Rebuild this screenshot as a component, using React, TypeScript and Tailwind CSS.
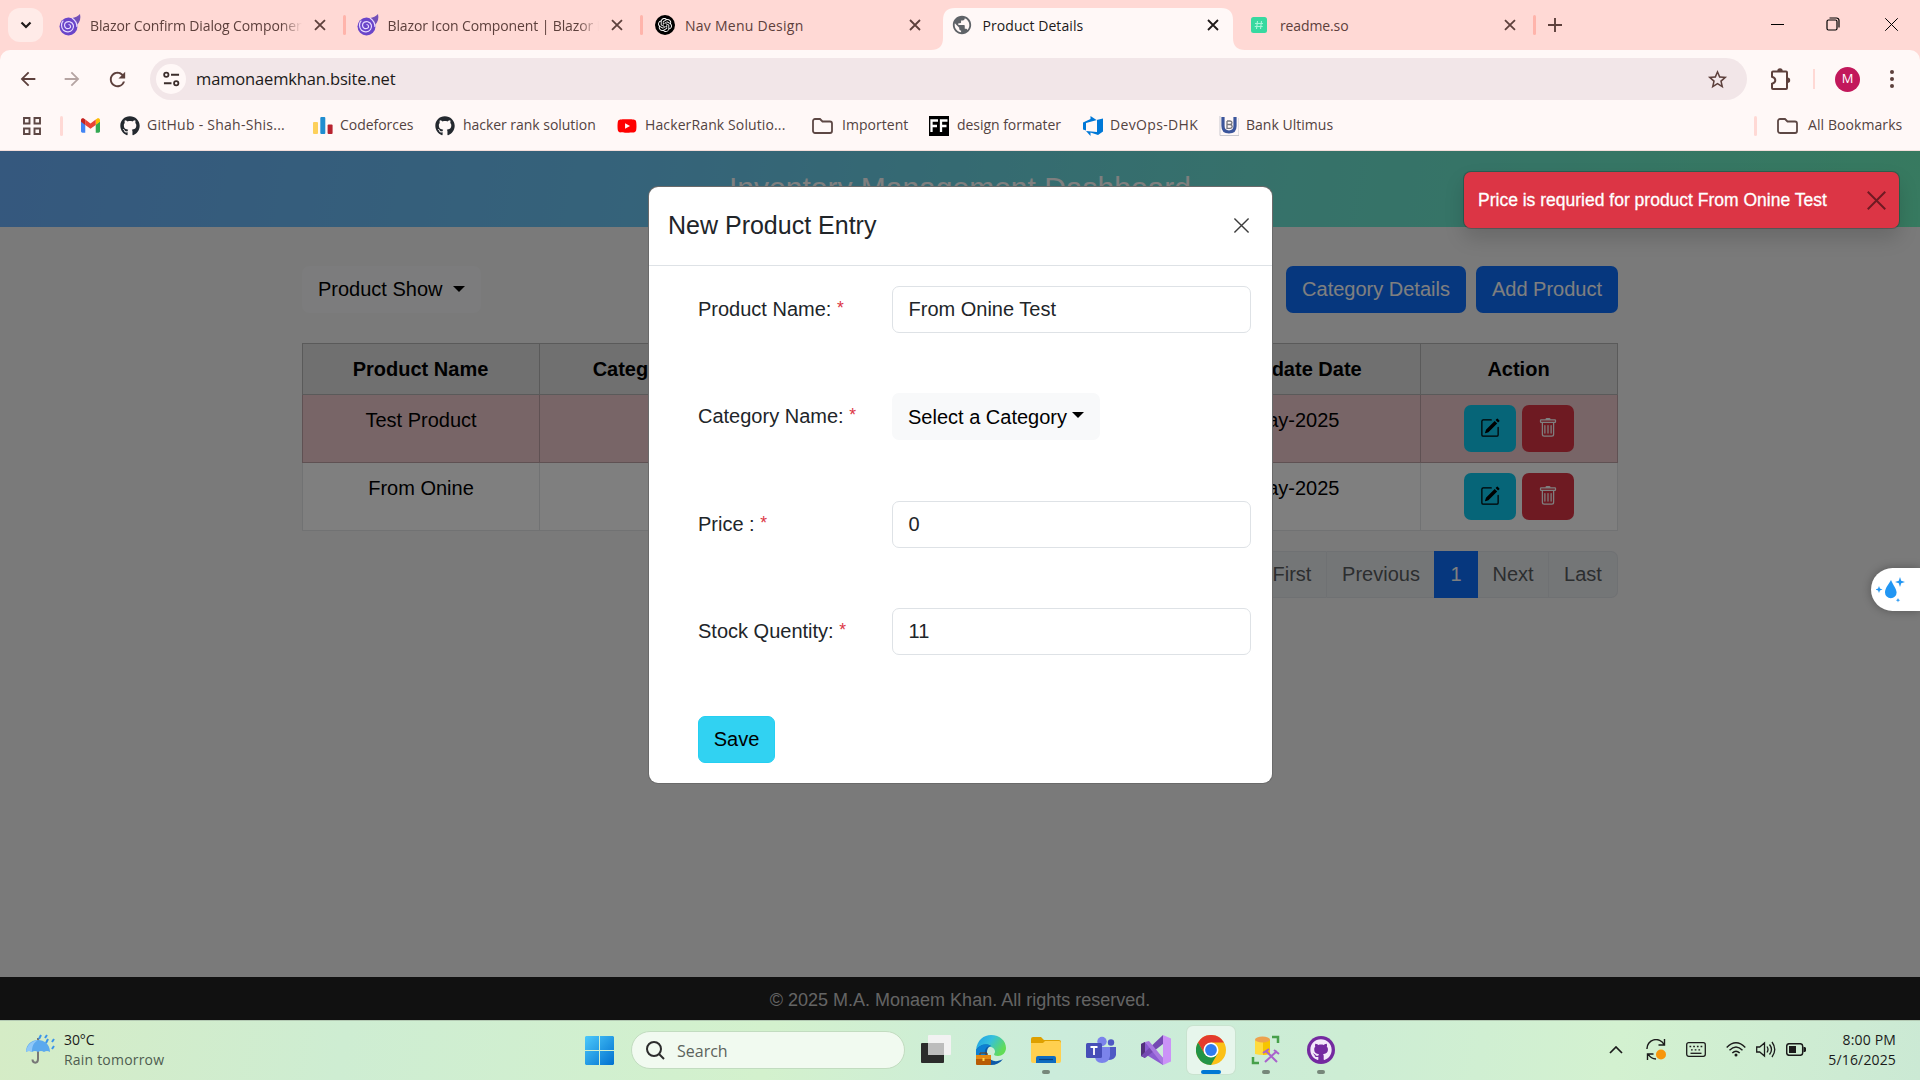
import React from "react";
import { FaGithub, FaYoutube } from "react-icons/fa";
import { SiOpenai } from "react-icons/si";
import { BsPencilSquare, BsTrash } from "react-icons/bs";
import { MdRefresh, MdArrowBack, MdArrowForward, MdPublic, MdStarBorder } from "react-icons/md";

const UI = "font-['Open_Sans','Noto_Sans',sans-serif]";

function Cross({ className, w = 1.8 }: { className: string; w?: number }) {
  return (
    <svg viewBox="0 0 12 12" className={className} fill="none" stroke="currentColor" strokeWidth={w}>
      <path d="M1 1 11 11M11 1 1 11" />
    </svg>
  );
}

function Blazor() {
  return (
    <svg viewBox="0 0 22 22" className="-ml-px size-[22px]">
      <path d="M21 0c-2 2.500-5 3.500-8 4l5 7c3-3 4-7 3-11z" fill="#7350b8" />
      <circle cx="9.500" cy="12.500" r="9" fill="#6a45c9" />
      <path d="M13 4c3 2 5 5 5 9M9.500 10.500c2 0 3 2.500 1 3.800-2.500 1.200-5-.6-5-3 0-3 3-4.300 5.500-3.500 3.500 1 4.500 5 2.500 7.700-2.200 3-6.500 3.200-9 .8-2.500-2.600-2.700-7-.2-9.600" fill="none" stroke="#e6d9ff" strokeWidth="1.200" />
    </svg>
  );
}

function ReadmeLogo() {
  return (
    <svg viewBox="0 0 18 18" className="size-[18px]">
      <rect x="1" y="1" width="16" height="16" rx="2.500" fill="#37d9a0" />
      <path d="M7.500 5 6.500 13M11.500 5l-1 8M5 7.500h8M4.700 10.500h8" stroke="#a5f5d8" strokeWidth="1.100" />
    </svg>
  );
}

const fadeTitle =
  "w-[212px] overflow-hidden whitespace-nowrap text-[14px] tracking-[-0.120px] [mask-image:linear-gradient(90deg,#000_90%,transparent)]";

const tabs = [
  { icon: <Blazor />, title: "Blazor Confirm Dialog Component", look: fadeTitle },
  { icon: <Blazor />, title: "Blazor Icon Component | Blazor Bootstrap", look: fadeTitle },
  {
    icon: (
      <span className="flex size-5 items-center justify-center rounded-full bg-black text-white">
        <SiOpenai size={14} />
      </span>
    ),
    title: "Nav Menu Design",
    look: "w-[212px] whitespace-nowrap text-[14px] tracking-[0.260px]",
  },
  {
    icon: <MdPublic size={22} className="-ml-0.5 text-[#5f6368]" />,
    title: "Product Details",
    active: true,
    look: "relative w-[212px] whitespace-nowrap text-[14px] tracking-[0.080px]",
  },
  { icon: <ReadmeLogo />, title: "readme.so", look: "w-[212px] whitespace-nowrap text-[14px] tracking-[-0.120px]" },
];

function TabStrip() {
  return (
    <div className={`flex h-[50px] bg-[#ffd9d5] text-[#5d403c] ${UI}`}>
      <div className="ml-2 mt-2 flex h-[34px] w-[35px] items-center justify-center rounded-xl bg-[#ffebe8] text-[#201a19]">
        <svg viewBox="0 0 12 8" className="h-2 w-3" fill="none" stroke="currentColor" strokeWidth="2.200">
          <path d="M1.500 1.500 6 6l4.500-4.500" />
        </svg>
      </div>
      <div className="ml-[5px] flex">
        {tabs.map((t, i) => (
          <div
            key={t.title}
            className={
              t.active
                ? "relative flex w-[297.5px] items-center text-[#201a19]"
                : "flex w-[297.5px] items-center"
            }
          >
            {t.active && (
              <svg viewBox="0 0 314 42" className="absolute -left-[10px] top-2 h-[42px] w-[314px]" fill="#fff8f7">
                <path d="M0 42c8 0 12-4 12-12V12C12 4 16 0 24 0h266c8 0 12 4 12 12v18c0 8 4 12 12 12z" />
              </svg>
            )}
            <span className="relative ml-3 flex w-[30px] shrink-0 items-center">{t.icon}</span>
            <span className={t.look}>{t.title}</span>
            <Cross className="relative ml-[12px] size-[12px]" w={1.8} />
            {i !== 2 && i !== 3 && <span className="ml-[17px] h-5 w-[3px] rounded bg-[#ffb4ab]" />}
          </div>
        ))}
      </div>
      <svg viewBox="0 0 14 14" className="ml-[12.500px] mt-[18px] size-[14px]" stroke="currentColor" strokeWidth="1.900">
        <path d="M7 0v14M0 7h14" />
      </svg>
      <div className="ml-auto flex h-[48px] items-center text-black">
        <span className="h-px w-[13px] bg-black" />
        <svg viewBox="0 0 14 14" className="ml-[42.500px] size-[14px]" fill="none" stroke="currentColor" strokeWidth="1.200">
          <rect x="1" y="3" width="10" height="10" rx="1.500" />
          <path d="M3.500 1h7A2.500 2.500 0 0 1 13 3.500v7" />
        </svg>
        <Cross className="ml-[44px] mr-[21px] size-[15px]" w={0.8} />
      </div>
    </div>
  );
}

function Toolbar() {
  return (
    <div className={`flex h-[58px] items-center rounded-t-[10px] bg-[#fff8f7] text-[#5d403c] ${UI}`}>
      <MdArrowBack size={22} className="ml-[17px]" />
      <MdArrowForward size={22} className="ml-[22px] text-[#b5a4a2]" />
      <MdRefresh size={23} className="ml-[23px]" />
      <div className="ml-[21px] flex h-[42px] w-[1597px] items-center rounded-full bg-[#f2e6e8]">
        <span className="ml-[6px] flex size-[30px] items-center justify-center rounded-full bg-[#fff8f7]">
          <svg viewBox="0 0 18 16" className="h-4 w-[17px]" fill="none" stroke="#3b2d2b" strokeWidth="1.900">
            <circle cx="3.500" cy="3.500" r="2.300" />
            <path d="M8.500 3.500H17M1 12.500h8" />
            <circle cx="14" cy="12.500" r="2.300" />
          </svg>
        </span>
        <span className="ml-2.5 pt-px text-[16.500px] tracking-[-0.150px] text-[#201a19]">mamonaemkhan.bsite.net</span>
        <MdStarBorder size={23} className="ml-auto mr-[18px]" />
      </div>
      <svg viewBox="0 0 24 24" className="ml-[21px] size-6" fill="none" stroke="currentColor" strokeWidth="2">
        <path d="M4 5.500Q4 4.500 5 4.500h13q1 0 1 1V21q0 1-1 1H5q-1 0-1-1v-4.200q3.300-.8 3.300-3.500T4 9.700z" />
        <path d="M9.300 4a2.700 2.700 0 0 1 5.400 0zM19.500 10.500a2.700 2.700 0 0 1 0 5.400z" fill="currentColor" stroke="none" />
      </svg>
      <span className="ml-[21px] h-5 w-0.5 bg-[#ffd9d5]" />
      <span className="ml-5 flex size-[25px] items-center justify-center rounded-full bg-[#c2185b] text-[13px] text-white">M</span>
      <svg viewBox="0 0 4 18" className="ml-[30px] h-[18px] w-1" fill="currentColor">
        <circle cx="2" cy="2" r="2" />
        <circle cx="2" cy="9" r="2" />
        <circle cx="2" cy="16" r="2" />
      </svg>
    </div>
  );
}

function FolderOutline() {
  return (
    <svg viewBox="0 0 21 16" className="h-4 w-[21px]" fill="none" stroke="#5d4744" strokeWidth="1.800">
      <path d="M1 13V3a2 2 0 0 1 2-2h5l2.500 2.500H18a2 2 0 0 1 2 2V13a2 2 0 0 1-2 2H3a2 2 0 0 1-2-2z" />
    </svg>
  );
}

function Mark({ w, gap, icon, label }: { w: string; gap: string; icon: React.ReactNode; label?: string }) {
  return (
    <div className={`flex shrink-0 items-center whitespace-nowrap ${w}`}>
      <span className={`flex shrink-0 items-center ${gap}`}>{icon}</span>
      <span className="-mt-0.5">{label}</span>
    </div>
  );
}

function Bookmarks() {
  return (
    <div className={`flex h-[43px] items-center border-b border-[#f3dedb] bg-[#fff8f7] pb-[7px] text-[14px] tracking-[-0.040px] text-[#534341] ${UI}`}>
      <svg viewBox="0 0 18 18" className="ml-[23px] size-[18px]" fill="none" stroke="#5d4744" strokeWidth="1.900">
        <path d="M1 1h5.500v5.500H1zM11.500 1H17v5.500h-5.500zM1 11.500h5.500V17H1zM11.500 11.500H17V17h-5.500z" />
      </svg>
      <span className="ml-[19px] mr-[18px] h-5 w-[3px] rounded bg-[#ffd9d5]" />
      <Mark
        w="w-[39px]"
        gap=""
        icon={
          <svg viewBox="0 0 20 15" className="h-[15px] w-[19px]">
            <path d="M0 3v10.500C0 14.300.7 15 1.500 15h3V6.500z" fill="#4285f4" />
            <path d="M20 3v10.500c0 .8-.7 1.500-1.500 1.500h-3V6.500z" fill="#34a853" />
            <path d="M15.500 1.200V7L20 3.600V2c0-2-2-2.500-3.300-1.600z" fill="#fbbc04" />
            <path d="M4.500 1.200 10 5.300l5.500-4.100V7L10 11 4.500 7z" fill="#ea4335" />
            <path d="M0 2v1.600L4.500 7V1.200L3.300.4C2-.5 0 0 0 2z" fill="#c5221f" />
          </svg>
        }
      />
      <Mark w="w-[193px] tracking-[0.260px]" gap="w-[27px]" icon={<FaGithub size={20} color="#24292f" />} label="GitHub - Shah-Shis..." />
      <Mark
        w="w-[122px]"
        gap="w-[27px]"
        icon={
          <svg viewBox="0 0 20 17" className="h-[17px] w-5">
            <rect y="5" width="5" height="12" rx="1" fill="#fdd05a" />
            <rect x="7.300" y="0" width="5" height="17" rx="1" fill="#1f8dd0" />
            <rect x="14.600" y="7.500" width="5" height="9.500" rx="1" fill="#b8232f" />
          </svg>
        }
        label="Codeforces"
      />
      <Mark w="w-[182px]" gap="w-[28px]" icon={<FaGithub size={20} color="#24292f" />} label="hacker rank solution" />
      <Mark w="w-[195px] tracking-[0.120px]" gap="w-[28px]" icon={<FaYoutube size={20} color="#f00" />} label="HackerRank Solutio..." />
      <Mark w="w-[117px] tracking-[0.040px]" gap="w-[30px]" icon={<FolderOutline />} label="Importent" />
      <Mark
        w="w-[154px]"
        gap="w-[28px]"
        icon={
          <svg viewBox="0 0 20 20" className="size-5">
            <rect width="20" height="20" />
            <path d="M2.500 16V4.500h6.500M2.500 10h5.500M12 16V4.500h6.500M12 10h5.500" stroke="#fff" strokeWidth="2.300" fill="none" />
          </svg>
        }
        label="design formater"
      />
      <Mark
        w="w-[136px] tracking-[0.340px]"
        gap="w-[27px]"
        icon={
          <svg viewBox="0 0 20 20" className="size-5" fill="#0078d7">
            <path d="M0 6.500 7.500 3V0l6 4 6.500-1.500v13L15 19l-7.500-2.500V20l-4.500-5 11 1V4L3 7v7.500L0 13.500z" />
          </svg>
        }
        label="DevOps-DHK"
      />
      <Mark
        w="w-[130px] tracking-[0.020px]"
        gap="w-[27px]"
        icon={
          <svg viewBox="0 0 20 20" className="size-5" fill="none">
            <path d="M1 0v19.500h19V2" stroke="#c9c9cf" />
            <path d="M4 1v9c0 4 2.500 6 6 6s6-2 6-6V1" stroke="#3b559b" strokeWidth="3.200" />
            <path d="M8 5h3q2 .2 2 1.700T11 8.500H8V5M8 8.500h3.200q2 .2 2 1.900t-2 1.900H8z" stroke="#76767d" strokeWidth="1.300" />
          </svg>
        }
        label="Bank Ultimus"
      />
      <span className="ml-auto mr-5 h-5 w-[3px] rounded bg-[#ffd9d5]" />
      <Mark w="w-[143px] tracking-[0.080px]" gap="w-[31px]" icon={<FolderOutline />} label="All Bookmarks" />
    </div>
  );
}

function Caret({ className }: { className: string }) {
  return <span className={`inline-block h-0 w-0 border-x-[6px] border-t-[6px] border-x-transparent border-t-current ${className}`} />;
}

const rows = [
  { name: "Test Product", tone: "bg-[#f1cbce] border-[#bfa3a6]", cell: "border-[#bfa3a6]" },
  { name: "From Onine", tone: "bg-white border-[#e2e4e6]", cell: "border-[#e2e4e6]" },
];

const cols = "grid grid-cols-[237px_254px_174px_173px_280px_1fr]";

function ProductPage() {
  return (
    <div className="flex h-full flex-col bg-[#f4f4f4] text-black">
      <header className="flex h-[76px] justify-center bg-[linear-gradient(100deg,#6ab0fc_0%,#6ac6f4_33%,#6ce4d4_67%,#6ef4c0_100%)] pt-[15px]">
        <h1 className="text-[30px] leading-[44px] text-white">Inventory Management Dashboard</h1>
      </header>
      <main className="ml-[302px] flex w-[1316px] flex-1 flex-col pt-[39px] text-[20px] leading-[30px]">
        <div className="flex h-[47px] gap-2.5">
          <button className="mr-auto flex w-[179px] items-center rounded-[7px] bg-[#f8f9fa] pb-0.5 pl-4">
            Product Show
            <Caret className="ml-[10px]" />
          </button>
          <button className="w-[180px] rounded-[7px] bg-[#0d6efd] pb-0.5 text-white">Category Details</button>
          <button className="w-[142px] rounded-[7px] bg-[#0d6efd] pb-0.5 text-white">Add Product</button>
        </div>
        <div className="mt-[30px] text-center">
          <div className={`${cols} h-[52px] items-stretch border-y border-l border-[#b5b5b5] bg-[#e1e1e1] font-bold leading-[50px]`}>
            {["Product Name", "Category Name", "Price", "Stock", "Last Update Date", "Action"].map((h) => (
              <div key={h} className="-ml-px whitespace-nowrap border-r border-[#b5b5b5]">{h}</div>
            ))}
          </div>
          {rows.map((r) => (
            <div key={r.name} className={`${cols} h-[68px] border-b border-l ${r.tone}`}>
              {[r.name, "", "", "", "16-May-2025"].map((c, i) => (
                <div key={i} className={`border-r pt-[10px] ${r.cell}`}>{c}</div>
              ))}
              <div className={`flex justify-center gap-1.5 border-r pt-2.5 ${r.cell}`}>
                <span className="flex h-[47px] w-[52px] items-center justify-center rounded-[7px] bg-[#0dcaf0]">
                  <BsPencilSquare size={20} className="-mt-0.5" />
                </span>
                <span className="flex h-[47px] w-[52px] items-center justify-center rounded-[7px] bg-[#dc3545] pr-px text-white">
                  <BsTrash size={20} className="-mt-0.5" />
                </span>
              </div>
            </div>
          ))}
        </div>
        <nav className="mt-5 flex h-[47px] justify-end text-center leading-[44px] text-[#595c5f]">
          <span className="w-[70px] rounded-l-[7px] border border-[#dee2e6] bg-[#e9ecef]">First</span>
          <span className="w-[107px] border-y border-[#dee2e6] bg-[#e9ecef] pl-px">Previous</span>
          <span className="w-[44px] bg-[#0d6efd] leading-[46px] text-white">1</span>
          <span className="w-[71px] border-y border-r border-[#dee2e6] bg-[#e9ecef]">Next</span>
          <span className="w-[69px] rounded-r-[7px] border-y border-r border-[#dee2e6] bg-[#e9ecef]">Last</span>
        </nav>
      </main>
      <footer className="h-[43px] bg-[#222] text-center text-[18px] leading-[46px] text-[#c8c8c8]">
        © 2025 M.A. Monaem Khan. All rights reserved.
      </footer>
    </div>
  );
}

function Field({ label, h, children }: { label: string; h: string; children: React.ReactNode }) {
  return (
    <div className={`flex ${h}`}>
      <label className="w-[194px] pt-2 leading-[30px]">
        {label} <span className="relative -top-0.5 text-[17.500px] text-[#dc3545]">*</span>
      </label>
      {children}
    </div>
  );
}

function Input({ value }: { value: string }) {
  return (
    <div className="h-[47px] w-[359px] rounded-[7px] border border-[#dee2e6] pl-[15.500px] leading-[45px]">{value}</div>
  );
}

function Modal() {
  return (
    <section className="absolute left-[649px] top-[36px] h-[596px] w-[623px] rounded-[9px] bg-white text-[20px] text-[#212529] shadow-[0_0_0_1px_#6a6a6a]">
      <div className="flex h-[79px] items-center justify-between border-b border-[#dee2e6] pb-px pl-[19px] pr-[22px]">
        <h2 className="text-[25px]">New Product Entry</h2>
        <Cross className="size-[17px] text-[#3c3c3c]" w={1} />
      </div>
      <div className="pl-[49px] pt-5">
        <Field h="h-[107px]" label="Product Name:"><Input value="From Onine Test" /></Field>
        <Field h="h-[108px]" label="Category Name:">
          <div className="flex h-[47px] w-[208px] items-center whitespace-nowrap rounded-[7px] bg-[#f8f9fa] pl-4 text-black">
            Select a Category
            <Caret className="-mt-1 ml-[5px]" />
          </div>
        </Field>
        <Field h="h-[107px]" label="Price :"><Input value="0" /></Field>
        <Field h="h-[108px]" label="Stock Quentity:"><Input value="11" /></Field>
        <button className="h-[47px] w-[77px] rounded-[7px] border border-[#25cff2] bg-[#31d2f2] pb-0.5 text-black">Save</button>
      </div>
    </section>
  );
}

function Toast() {
  return (
    <div className="absolute left-[1464px] top-[21px] flex h-[56px] w-[435px] items-center justify-between rounded-[7px] bg-[#dc3545] pl-[14px] pr-[12px] text-[17.500px] text-white shadow-[0_10px_20px_rgba(0,0,0,0.15),0_0_0_1px_rgba(0,0,0,0.2)] [-webkit-text-stroke:0.3px_white]">
      Price is requried for product From Onine Test
      <Cross className="size-[21px] text-[#6e1a22]" w={1.1} />
    </div>
  );
}

function DropWidget() {
  return (
    <div className="absolute right-0 top-[417px] flex h-[43px] w-[49px] items-center rounded-l-full bg-white pl-1.5 shadow-[0_0_10px_rgba(0,0,0,0.3)]">
      <svg viewBox="0 0 30 26" className="-ml-px h-[26px] w-[30px]" fill="#2196f3">
        <path d="M15 3c-2 4-6 8-6 12.500a5.800 5.800 0 0 0 11.600 0C20.600 12 17 8 15 3z" />
        <path d="M24 0l1.200 3.800L29 5l-3.800 1.200L24 10l-1.200-3.800L19 5l3.800-1.200zM3 9l.9 2.600 2.600.9-2.600.9L3 16l-.9-2.600-2.600-.9 2.600-.9zM22 21l.6 1.600 1.600.6-1.600.6L22 25.500l-.6-1.700-1.600-.6 1.600-.6z" />
      </svg>
    </div>
  );
}

function AppSlot({ children, mark, active }: { children: React.ReactNode; mark?: boolean; active?: boolean }) {
  return (
    <div className={active ? "flex h-12 w-12 flex-col items-center rounded-md bg-[#e7f6ec] pt-[9px] shadow-[0_0_0_1px_#c9e3cf]" : "flex h-12 w-12 flex-col items-center pt-[9px]"}>
      <span className="flex size-[30px] items-center justify-center">{children}</span>
      {active && <span className="mt-[5px] h-1 w-5 rounded-full bg-[#0078d4]" />}
      {mark && <span className="mt-[5px] h-1 w-2 rounded-full bg-[#76877a]" />}
    </div>
  );
}

function Taskbar() {
  return (
    <div className={`flex h-[60px] border-t border-[#b3c9b3] bg-[linear-gradient(100deg,#d5ecc6_0%,#ceedd2_18%,#d3f1cd_40%,#cbecdb_55%,#cdedd4_70%,#d3f1d0_84%,#cbe9d4_100%)] text-[14px] text-[#1b1b1b] ${UI}`}>
      <div className="flex w-[573px] pl-[26px] pt-[12px]">
        <svg viewBox="0 0 29 30" className="mt-[1px] h-[30px] w-[29px]">
          <path d="M12 4v21c0 5-5.500 4.500-5.500.5" fill="none" stroke="#777" strokeWidth="2" />
          <path d="M0 18C0 2 24 2 24 18q-3-2-6 0-3-2-6 0-3-2-6 0-3-2-6 0z" fill="#5ba9ee" />
          <path d="M0 18C1 10 6 7 12 6 7 9 6 13 6 18q-3-2-6 0z" fill="#8fc8f8" />
          <path d="m15 1-2 4M21 1l-2 3M22 5l-2 4M28 5l-2 3M28 12l-2 3" stroke="#3a94ea" strokeWidth="2" />
        </svg>
        <div className="ml-[9px] leading-5">
          <div className="mt-[-3px] tracking-[-0.100px]">30°C</div>
          <div className="tracking-[0.200px] text-[#4f5d50]">Rain tomorrow</div>
        </div>
      </div>
      <div className="flex pt-[5px]">
        <svg viewBox="0 0 29 29" className="ml-3 mt-[10px] size-[29px]">
          <defs>
            <linearGradient id="win" gradientUnits="userSpaceOnUse" x1="0" y1="0" x2="29" y2="29">
              <stop stopColor="#4cc9fb" />
              <stop offset="1" stopColor="#0070cf" />
            </linearGradient>
          </defs>
          <path d="M1 0h13v14H0V1zM15 0h13l1 1v13H15zM0 15h14v14H1l-1-1zM15 15h14v13l-1 1H15z" fill="url(#win)" />
        </svg>
        <div className="ml-[17px] mt-[5px] flex h-[38px] w-[274px] items-center rounded-full border border-[#c2dcc0] bg-[#f1faf0] pl-[14px] text-[16px] text-[#5c635c]">
          <svg viewBox="0 0 19 19" className="mr-[12px] size-[19px]" fill="none" stroke="#2c2c2c" strokeWidth="2">
            <circle cx="8" cy="8" r="7" />
            <path d="m13 13 5 5" />
          </svg>
          <span className="pt-0.5">Search</span>
        </div>
        <div className="ml-[7px] flex gap-[7px]">
          <AppSlot>
            <svg viewBox="0 0 30 30" className="size-[30px]">
              <rect y="8" width="23" height="20" rx="1" fill="#2b2b2b" />
              <rect x="7" y="0" width="23" height="20" rx="1" fill="#f2f2f2" />
              <path d="M7 8h16v12H7z" fill="#bdbdbd" />
            </svg>
          </AppSlot>
          <AppSlot>
            <svg viewBox="0 0 30 30" className="size-[30px]">
              <defs>
                <linearGradient id="edge" x1="0" y1="0" x2="1" y2=".5">
                  <stop stopColor="#1c9de8" />
                  <stop offset=".5" stopColor="#36c0dc" />
                  <stop offset="1" stopColor="#62dc55" />
                </linearGradient>
              </defs>
              <path d="M0 15C1 5 8 0 15 0c9 0 15 6 15 13 0 5-4 8-8 8-3 0-4-1-4-2 2-2 1-6-3-7C9 10 3 12 0 15z" fill="url(#edge)" />
              <path d="M0 15c3-5 10-7 15-4-4 1-5 6-3 10 2 5 8 7 15 3-3 4-7 6-12 6C6 30 0 23 0 15z" fill="#0d59a8" />
              <path d="M0 15c3-5 10-7 15-4-5 0-7 4-6 9H0z" fill="#0d80d2" />
              <rect y="20" width="15" height="10" rx="1" fill="#b85c05" />
              <path d="M0 20h15v4H0z" fill="#e48a13" />
              <path d="M4 20v-2h7v2" fill="none" stroke="#7a3c05" />
              <rect x="6.500" y="23" width="2" height="3" fill="#ffd24a" />
            </svg>
          </AppSlot>
          <AppSlot mark>
            <svg viewBox="0 0 30 26" className="h-[26px] w-[30px]">
              <path d="M0 2Q0 0 2 0h8l3 3h15q2 0 2 2v6H0z" fill="#dea000" />
              <path d="M0 6h12l2-2h14q2 0 2 2v18q0 2-2 2H2q-2 0-2-2z" fill="#ffd04f" />
              <path d="M5 26v-5q0-2 2-2h16q2 0 2 2v5z" fill="#0f6cc0" />
              <path d="M8 22.500h14" stroke="#073f7e" strokeWidth="1.200" />
            </svg>
          </AppSlot>
          <AppSlot>
            <svg viewBox="0 0 30 30" className="size-[30px]">
              <circle cx="25" cy="7.500" r="3.200" fill="#4e59c4" />
              <path d="M20 12h10v8q-1 5-8 5z" fill="#4e59c4" />
              <circle cx="16" cy="6.500" r="4.700" fill="#7b83eb" />
              <path d="M9 12h15v9q-1 7-8 7t-7-7z" fill="#7b83eb" />
              <rect y="8" width="16" height="15" rx="1.500" fill="#464eb8" />
              <path d="M4.500 12h7M8 12v8" stroke="#fff" strokeWidth="1.800" />
            </svg>
          </AppSlot>
          <AppSlot>
            <svg viewBox="0 0 30 30" className="size-[30px]">
              <path d="M0 9l4-2 18 16v7L4 19z" fill="#8a5bd0" />
              <path d="M0 9l4-2v16l-4-2z" fill="#52307c" />
              <path d="M0 21l4 2L22 9V0L4 17z" fill="#7449b2" />
              <path d="M4 7l4-1 14 17v7z" fill="#a777e0" />
              <path d="M22 0l8 3.500v23L22 30z" fill="#cb93f7" />
            </svg>
          </AppSlot>
          <AppSlot active>
            <svg viewBox="0 0 30 30" className="size-[30px]">
              <circle cx="15" cy="15" r="15" fill="#fbc116" />
              <path d="M2 7.500A15 15 0 0 1 28 7.500H15L8.500 19z" fill="#e33b2e" />
              <path d="M2 7.500A15 15 0 0 0 15 30l6.500-11.300H8.500z" fill="#229446" />
              <circle cx="15" cy="15" r="7.500" fill="#fff" />
              <circle cx="15" cy="15" r="5.900" fill="#2f7cf0" />
            </svg>
          </AppSlot>
          <AppSlot mark>
            <svg viewBox="0 0 30 30" className="size-[30px]" fill="none">
              <path d="M21 2h6v6M2 22v6h6" stroke="#46a04a" strokeWidth="2.500" />
              <path d="M4 5h15v14q-7 2-15 0z" fill="#ffdb3d" />
              <path d="M12 5h7v14l-7 1z" fill="#f7c500" />
              <ellipse cx="11.500" cy="4.500" rx="7.500" ry="3" fill="#eda24e" />
              <path d="m15 16 11 11M26 16 14 27M12 18l6-4M23 15l5 4" stroke="#a962cc" strokeWidth="2" />
            </svg>
          </AppSlot>
          <AppSlot mark>
            <span className="flex size-[28px] items-center justify-center rounded-full bg-[#7429a0]">
              <FaGithub size={22} color="#f3e8fa" />
            </span>
          </AppSlot>
        </div>
      </div>
      <div className="ml-auto flex items-center pr-6 pb-0.5">
        <svg viewBox="0 0 14 8" className="h-2 w-[14px]" fill="none" stroke="currentColor" strokeWidth="1.700">
          <path d="m1 7 6-6 6 6" />
        </svg>
        <svg viewBox="0 0 20 21" className="ml-[23px] h-[21px] w-5" fill="none" stroke="currentColor" strokeWidth="1.400">
          <path d="M1 10A9 9 0 0 1 18 5.500M18.500 0v6h-6M10 20a9 9 0 0 1-7.500-4.500M1.500 21v-6h6" />
          <circle cx="15" cy="15.500" r="5" fill="#f7960c" stroke="none" />
        </svg>
        <svg viewBox="0 0 20 15" className="ml-5 h-[15px] w-5" fill="none" stroke="currentColor" strokeWidth="1.300">
          <rect x=".7" y=".7" width="18.600" height="13.600" rx="2" />
          <path d="M3.500 4.500h13" strokeDasharray="1.700 2" />
          <path d="M5 7.800h11" strokeDasharray="1.700 2" />
          <path d="M4.500 11.300h11" />
        </svg>
        <svg viewBox="0 0 20 15" className="ml-5 h-[15px] w-5" fill="none" stroke="currentColor" strokeWidth="1.400">
          <path d="M.7 5.500q9.300-9.300 18.600 0M3.500 8.300q6.500-6.500 13 0M6.300 11q3.700-3.700 7.400 0" />
          <circle cx="10" cy="13" r="1.500" fill="currentColor" stroke="none" />
        </svg>
        <svg viewBox="0 0 20 17" className="ml-2.5 h-[17px] w-5" fill="none" stroke="currentColor" strokeWidth="1.300">
          <path d="M.7 6v5h3l4.800 4V2L3.700 6zM11 5.500q2 3 0 6M13.500 3.500q4 5 0 10M16 1q5.500 7.500 0 15" />
        </svg>
        <svg viewBox="0 0 20 13" className="ml-2.5 h-[13px] w-5" fill="none" stroke="currentColor" strokeWidth="1.500">
          <rect x=".7" y=".7" width="16" height="11.600" rx="2.500" />
          <path d="M3 3h7v7H3zM17.500 4h1.500l1 1v3l-1 1h-1.500z" fill="currentColor" stroke="none" />
        </svg>
        <div className="ml-[20px] w-[70px] whitespace-nowrap text-right leading-5 tracking-[0.150px]">
          <div>8:00 PM</div>
          <div>5/16/2025</div>
        </div>
      </div>
    </div>
  );
}

export default function App() {
  return (
    <div className="flex h-[1080px] w-[1920px] flex-col overflow-hidden bg-[#ffd9d5]">
      <TabStrip />
      <Toolbar />
      <Bookmarks />
      <div className="relative h-[869px] overflow-hidden font-['Liberation_Sans',Arial,sans-serif]">
        <ProductPage />
        <div className="absolute inset-0 bg-black/50" />
        <Modal />
        <Toast />
        <DropWidget />
      </div>
      <Taskbar />
    </div>
  );
}
